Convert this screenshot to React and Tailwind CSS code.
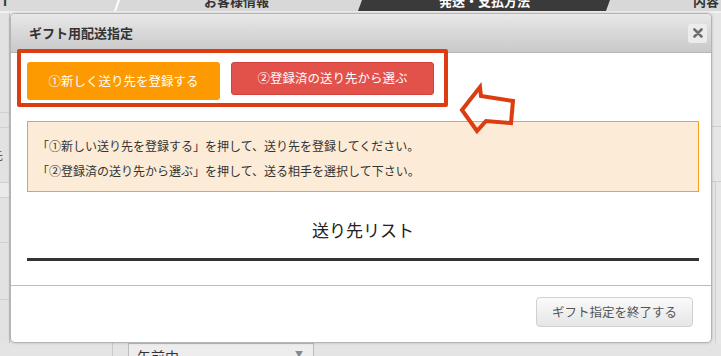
import React from "react"

const XIcon = () => (
  <svg width="10" height="10" viewBox="0 0 10 10">
    <path d="M1.5 1.5 L8.5 8.5 M8.5 1.5 L1.5 8.5" stroke="#6f6f6f" strokeWidth="2.6" strokeLinecap="round" />
  </svg>
)

const Background = () => (
  <div className="flex flex-col w-[721px] h-[356px] bg-[#e6e6e6]">
    {/* tab strip */}
    <div className="flex h-[11px] overflow-hidden bg-[#dadada] text-[13px] font-bold leading-none">
      <div className="w-[116px] pl-[1px] text-[#333] -mt-[6px]">Т</div>
      <div className="w-[2px] bg-white -skew-x-[20deg]"></div>
      <div className="w-[242px] bg-[#d8d8d8] pl-[86px] text-[#333] -mt-[6px]">お客様情報</div>
      <div className="w-[248px] bg-[#3a3a3a] -skew-x-[20deg] flex justify-center">
        <span className="skew-x-[20deg] text-white -mt-[6px]">発送・支払方法</span>
      </div>
      <div className="flex-1 bg-[#d8d8d8] pl-[82px] text-[#333] -mt-[6px] ml-[3px]">内容</div>
    </div>
    <div className="h-[2px] bg-[#f0f0f0]"></div>
    {/* page body behind the dialog */}
    <div className="flex flex-1">
      <div className="w-[10px] flex flex-col bg-[#e2e2e2] border-r border-[#c4c4c4]">
        <div className="h-[100px] border-b border-[#cfcfcf]"></div>
        <div className="h-[15px] border-b border-[#cfcfcf]"></div>
        <div className="h-[55px] border-b border-[#cfcfcf] text-[12px] text-[#555] flex items-center -ml-[9px]">先</div>
        <div className="h-[15px] border-b border-[#cfcfcf] bg-[#eaeaea]"></div>
        <div className="h-[45px] border-b border-[#cfcfcf]"></div>
        <div className="h-[57px] border-b border-[#cfcfcf]"></div>
      </div>
      <div className="flex-1"></div>
      <div className="w-[9px] flex flex-col">
        <div className="h-[114px] border-b border-[#cfcfcf]"></div>
        <div className="h-[55px] border-b border-[#cfcfcf]"></div>
        <div className="flex-1 border-l border-[#cfcfcf] ml-[3px]"></div>
      </div>
    </div>
    <div className="h-[13px] flex bg-[#e4e4e4]">
      <div className="w-[113px] border-r border-[#c8c8c8]"></div>
      <div className="w-[15px]"></div>
      <div className="w-[186px] bg-[#ededed] border border-b-0 border-[#bdbdbd] flex justify-between pl-[8px] pr-[10px] overflow-hidden">
        <span className="text-[14px] text-[#333] leading-none mt-[5px]">午前中</span>
        <span className="text-[8px] text-[#888] mt-[4px]">▼</span>
      </div>
    </div>
  </div>
)

export default function App() {
  return (
    <div className="relative w-[721px] h-[356px] overflow-hidden font-['Noto_Sans_CJK_JP','Noto_Sans',sans-serif]">
      <Background />

      {/* dialog */}
      <div className="absolute left-[10px] top-[13px] w-[702px] h-[330px] flex flex-col bg-white border border-[#b4b4b4] rounded-[5px] overflow-hidden shadow-[0_0_3px_rgba(0,0,0,0.2)]">
        <div className="h-[39px] flex items-center justify-between pl-[18px] pr-[4px] bg-gradient-to-b from-[#e8e8e8] to-[#c9c9c9] border-b border-[#b5b5b5]">
          <span className="text-[13px] font-bold text-[#333]">ギフト用配送指定</span>
          <div className="w-[19px] h-[19px] flex items-center justify-center bg-[#ececec] rounded-[3px]">
            <XIcon />
          </div>
        </div>

        <div className="flex flex-col pl-[16px] pr-[12px] pt-[9px] pb-[24px]">
          <div className="flex items-start gap-[11px]">
            <button className="w-[193px] h-[38px] rounded-[3px] bg-[#fd9a02] text-white text-[12.5px]">
              ①新しく送り先を登録する
            </button>
            <button className="w-[203px] h-[33px] rounded-[3px] bg-[#e2514a] border border-[#d0433c] text-white text-[12.5px]">
              ②登録済の送り先から選ぶ
            </button>
          </div>

          <div className="mt-[21px] bg-[#fcebd7] border border-[#f8a11b] pl-[9px] pt-[11px] pb-[8px] text-[12px] leading-[25px] text-[#333]">
            <p>「①新しい送り先を登録する」を押して、送り先を登録してください。</p>
            <p>「②登録済の送り先から選ぶ」を押して、送る相手を選択して下さい。</p>
          </div>

          <h2 className="mt-[26px] text-center text-[17px] leading-[24px] text-[#222]">送り先リスト</h2>
          <div className="mt-[16px] h-[3px] bg-[#333]"></div>
        </div>

        <div className="border-t border-[#bcbcbc] flex justify-end pt-[11px] pr-[18px]">
          <button className="w-[157px] h-[30px] rounded-[4px] border border-[#d0d0d0] bg-gradient-to-b from-[#fafafa] to-[#e6e6e6] text-[12.5px] text-[#555]">
            ギフト指定を終了する
          </button>
        </div>
      </div>

      {/* annotation: red frame */}
      <div className="absolute left-[17px] top-[49px] w-[431px] h-[58px] border-4 border-[#dc3c10] rounded-[2px]"></div>

      {/* annotation: arrow */}
      <svg className="absolute left-0 top-0" width="721" height="356" viewBox="0 0 721 356">
        <path
          d="M462 110 L480 87 L481 96 L513 101 L511 123 L486 121 L477 131 Z"
          fill="none"
          stroke="#dc3c10"
          strokeWidth="4"
          strokeLinejoin="miter"
        />
      </svg>
    </div>
  )
}
